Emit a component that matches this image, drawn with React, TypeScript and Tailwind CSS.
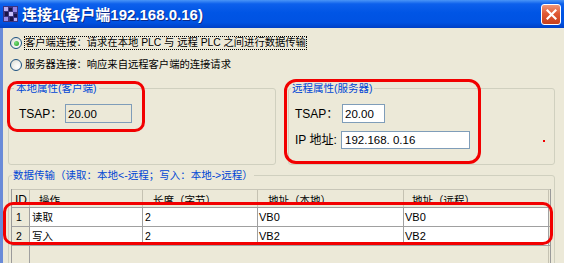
import React from "react";

function Radio({ checked }: { checked?: boolean }) {
  return (
    <span className="w-[12px] h-[12px] shrink-0 rounded-full border border-[#1c5180] bg-[radial-gradient(circle_at_65%_65%,#ffffff_0%,#f2f2ee_40%,#d6d6cc_100%)] flex items-center justify-center">
      {checked && <span className="w-[5px] h-[5px] rounded-full bg-[radial-gradient(circle_at_35%_35%,#7ee07e,#1e9a1e)]" />}
    </span>
  );
}

export default function App() {
  return (
    <div className="relative w-[564px] h-[263px] overflow-hidden bg-[#ece9d8] flex flex-col font-['Liberation_Sans','Noto_Sans_CJK_SC',sans-serif] text-[10.5px] leading-[12px] text-black">
      {/* title bar */}
      <div className="h-[28px] shrink-0 flex items-center pl-[3px] pr-[3px] bg-[linear-gradient(to_bottom,#4a95f7_0%,#0d60ec_14%,#0055e5_45%,#0052e2_80%,#0040c6_100%)]">
        <svg width="15" height="16" viewBox="0 0 15 16" className="shrink-0">
          <rect x="0" y="0" width="15" height="16" fill="#3b3480" />
          <rect x="1" y="1" width="4" height="4" fill="#b8acf0" />
          <rect x="6" y="2" width="3" height="3" fill="#1a1448" />
          <rect x="10" y="1" width="4" height="5" fill="#8f80e0" />
          <rect x="2" y="6" width="3" height="4" fill="#1a1448" />
          <rect x="6" y="6" width="4" height="4" fill="#c8c0f8" />
          <rect x="11" y="8" width="3" height="3" fill="#1a1448" />
          <rect x="1" y="11" width="4" height="4" fill="#9a8ce8" />
          <rect x="7" y="11" width="3" height="4" fill="#1a1448" />
          <rect x="11" y="12" width="3" height="3" fill="#b8acf0" />
        </svg>
        <span className="ml-[4px] text-white font-bold text-[15px] leading-none [text-shadow:1px_1px_0_#0a2a8a]">
          连接1(客户端192.168.0.16)
        </span>
        <div className="ml-auto w-[20px] h-[21px] rounded-[3px] border border-white bg-[linear-gradient(to_bottom,#f0977a_0%,#e05a35_45%,#c8401c_100%)] flex items-center justify-center">
          <svg width="11" height="11" viewBox="0 0 11 11">
            <path d="M1.5 1.5 L9.5 9.5 M9.5 1.5 L1.5 9.5" stroke="#ffffff" strokeWidth="2.2" strokeLinecap="square" />
          </svg>
        </div>
      </div>

      {/* body */}
      <div className="flex-1 min-h-0 flex flex-col border-l-[3px] border-[#6a8bd8]">
        <div className="pt-[4px] flex flex-col">
          <div className="h-[22px] flex items-center pl-[7px]">
            <Radio checked />
            <span className="ml-[2px] h-[14px] flex items-center border border-dotted border-black whitespace-pre text-[10.3px]">
              客户端连接：请求在本地 PLC 与 远程 PLC 之间进行数据传输
            </span>
          </div>
          <div className="h-[22px] flex items-center pl-[7px]">
            <Radio />
            <span className="ml-[2px] h-[14px] flex items-center border border-transparent whitespace-pre text-[10.3px]">
              服务器连接：响应来自远程客户端的连接请求
            </span>
          </div>
        </div>

        {/* property groups */}
        <div className="flex mt-[6px] pl-[5px] gap-[12px]">
          <fieldset className="w-[268px] h-[83px] min-w-0 border border-[#d0d0bf] rounded-[3px]">
            <legend className="ml-[5px] px-[2px] text-[#0046d5] leading-[12px]">本地属性(客户端)</legend>
            <div className="flex items-center pl-[10px] pt-[10px]">
              <span className="w-[46px] text-[12px] leading-[14px]">TSAP：</span>
              <div className="w-[67px] h-[19px] border border-[#7f9db9] bg-[#ece9d8] flex items-center pl-[2px] text-[11.5px]">20.00</div>
            </div>
          </fieldset>
          <fieldset className="w-[267px] h-[83px] min-w-0 border border-[#d0d0bf] rounded-[3px]">
            <legend className="ml-[2px] px-[1px] text-[#0046d5] leading-[12px]">远程属性(服务器)</legend>
            <div className="flex flex-col pl-[6px] pt-[10px] gap-[8px]">
              <div className="flex items-center">
                <span className="w-[47px] text-[12px] leading-[14px]">TSAP：</span>
                <div className="w-[43px] h-[19px] border border-[#7f9db9] bg-white flex items-center pl-[2px] text-[11.5px]">20.00</div>
              </div>
              <div className="flex items-center">
                <span className="w-[46px] text-[12px] leading-[14px] whitespace-pre">IP 地址:</span>
                <div className="w-[129px] h-[18px] border border-[#7f9db9] bg-white flex items-center pl-[3px] text-[11.5px] whitespace-pre">192.168. 0.16</div>
              </div>
            </div>
          </fieldset>
        </div>

        {/* data transfer group */}
        <fieldset className="mt-[4px] ml-[5px] w-[547px] h-[110px] shrink-0 min-w-0 border border-[#d0d0bf] rounded-[3px]">
          <legend className="ml-[3px] px-[1px] text-[#0046d5] leading-[12px]">数据传输（读取：本地&lt;-远程；写入：本地-&gt;远程）</legend>
          <div className="pl-[2px] pt-[8px]">
            <div className="w-[540px] border-l border-r border-[#9a9a9a] bg-[#ece9d8]">
              {/* header */}
              <div className="grid grid-cols-[18px_113px_115px_146px_145px] h-[18px] border-t border-[#c8c6b8]">
                <div className="flex items-end pb-[1px] pl-[3px] border-r border-[#c5c2b2] text-[12px]">ID</div>
                <div className="flex items-end pb-[1px] pl-[9px] border-r border-[#c5c2b2]">操作</div>
                <div className="flex items-end pb-[1px] pl-[10px] border-r border-[#c5c2b2]">长度（字节）</div>
                <div className="flex items-end pb-[1px] pl-[10px] border-r border-[#c5c2b2]">地址（本地）</div>
                <div className="flex items-end pb-[1px] pl-[8px] border-r border-[#c5c2b2]">地址（远程）</div>
              </div>
              {/* rows */}
              {[
                ["1", "读取", "2", "VB0", "VB0"],
                ["2", "写入", "2", "VB2", "VB2"],
              ].map((r) => (
                <div key={r[0]} className="grid grid-cols-[18px_113px_115px_146px_145px] h-[19px] border-t border-[#a0a0a0]">
                  <div className="flex items-center pl-[4px] border-r border-[#a0a0a0] bg-[#ece9d8]">{r[0]}</div>
                  <div className="flex items-center pl-[2px] border-r border-[#a0a0a0] bg-white">{r[1]}</div>
                  <div className="flex items-center pl-[2px] border-r border-[#a0a0a0] bg-white">{r[2]}</div>
                  <div className="flex items-center pl-[1px] border-r border-[#a0a0a0] bg-white text-[11px]">{r[3]}</div>
                  <div className="flex items-center pl-[1px] border-r border-[#a0a0a0] bg-white text-[11px]">{r[4]}</div>
                </div>
              ))}
              {/* empty area */}
              <div className="flex h-[40px] border-t border-[#a0a0a0]">
                <div className="w-[18px] border-r border-[#a0a0a0]" />
                <div className="w-[519px] border-r border-[#c5c2b2]" />
              </div>
            </div>
          </div>
        </fieldset>
      </div>

      {/* red annotations */}
      <div className="absolute left-[7px] top-[81px] w-[138px] h-[51px] border-[3px] border-[#f20000] rounded-[10px] pointer-events-none" />
      <div className="absolute left-[284px] top-[79px] w-[197px] h-[85px] border-[3px] border-[#f20000] rounded-[12px] pointer-events-none" />
      <div className="absolute left-[3px] top-[202px] w-[550px] h-[43px] border-[3px] border-[#f20000] rounded-[10px] pointer-events-none" />
      <div className="absolute left-[543px] top-[140px] w-[2px] h-[2px] bg-[#f20000]" />
    </div>
  );
}
